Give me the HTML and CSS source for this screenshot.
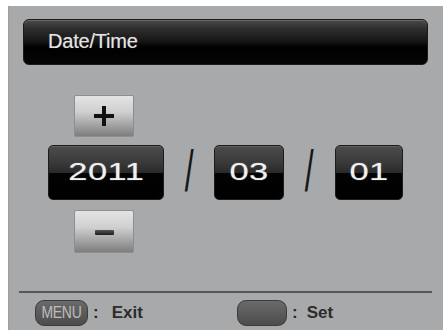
FILE: index.html
```html
<!DOCTYPE html>
<html>
<head>
<meta charset="utf-8">
<link rel="stylesheet" href="styles.css">
</head>
<body>
<div class="panel">
  <div class="header"><span class="title">Date/Time</span></div>
  <div class="step step-plus"><span class="plus"></span></div>
  <div class="date-row">
    <div class="field field-year"><span class="digits">2011</span></div>
    <div class="sep"><span class="slash">/</span></div>
    <div class="field field-month"><span class="digits">03</span></div>
    <div class="sep sep-2"><span class="slash">/</span></div>
    <div class="field field-day"><span class="digits">01</span></div>
  </div>
  <div class="step step-minus"><span class="minus"></span></div>
  <div class="rule"></div>
  <div class="footer">
    <div class="hint hint-exit">
      <span class="key key-menu"><span class="key-text">MENU</span></span>
      <span class="colon">:</span>
      <span class="label label-exit">Exit</span>
    </div>
    <div class="hint hint-set">
      <span class="key key-blank"></span>
      <span class="colon">:</span>
      <span class="label label-set">Set</span>
    </div>
  </div>
</div>
</body>
</html>
```

FILE: styles.css
```css
html, body {
  margin: 0;
  padding: 0;
  background: #ffffff;
}

body {
  width: 443px;
  height: 334px;
  overflow: hidden;
  font-family: "Liberation Sans", Arial, sans-serif;
}

.panel {
  margin: 6px 0 0 8px;
  width: 435px;
  height: 324px;
  background: #a7a9ab;
  display: flex;
  flex-direction: column;
  box-sizing: border-box;
  border-left: 1px solid #9c9ea0;
}

.header {
  margin: 13px 15px 0 14px;
  height: 46px;
  box-sizing: border-box;
  border-radius: 6px;
  border: 1px solid #1a1a1a;
  background: linear-gradient(to bottom, #4a4a4a 0%, #2e2e2e 20%, #141414 50%, #000000 62%, #050505 100%);
  box-shadow: inset 0 1px 0 rgba(255,255,255,0.18);
  display: flex;
  align-items: center;
  padding-left: 24px;
}

.title {
  color: #e4e4e4;
  font-size: 20px;
  letter-spacing: -0.2px;
  text-shadow: 0 0 1px rgba(255,255,255,0.4);
  margin-top: -1px;
}

.step {
  width: 60px;
  height: 42px;
  box-sizing: border-box;
  margin-left: 65px;
  border-radius: 2px;
  border: 1px solid #8c8e90;
  background: linear-gradient(to bottom, #e4e4e4 0%, #cfcfcf 40%, #a0a0a0 75%, #7e7e7e 100%);
  display: flex;
  align-items: center;
  justify-content: center;
  position: relative;
}

.step-plus {
  margin-top: 30px;
}

.step-minus {
  margin-top: 10px;
  height: 43px;
}

.plus {
  width: 20px;
  height: 20px;
  position: relative;
}

.plus::before,
.plus::after {
  content: "";
  position: absolute;
  background: #111111;
}

.plus::before {
  left: 0;
  top: 8px;
  width: 20px;
  height: 4px;
}

.plus::after {
  left: 8px;
  top: 0;
  width: 4px;
  height: 20px;
}

.minus {
  width: 19px;
  height: 5px;
  border-radius: 1px;
  background: linear-gradient(to bottom, #555555, #1e1e1e);
  margin-top: 2px;
}

.date-row {
  margin-top: 8px;
  height: 55px;
  display: flex;
  padding-left: 39px;
}

.field {
  height: 55px;
  box-sizing: border-box;
  border-radius: 5px;
  border: 1px solid #1c1c1c;
  background: linear-gradient(to bottom, #4c4c4c 0%, #3a3a3a 30%, #2a2a2a 50%, #030303 52%, #000000 100%);
  box-shadow: inset 0 1px 0 rgba(255,255,255,0.12);
  display: flex;
  align-items: center;
  justify-content: center;
}

.field-year {
  width: 116px;
}

.field-month {
  width: 70px;
}

.field-day {
  width: 68px;
}

.digits {
  display: inline-block;
  color: #f0f0f0;
  font-size: 23px;
  transform: scaleX(1.5);
  letter-spacing: 0.3px;
  margin-top: -1px;
  text-shadow: 0 0 1px rgba(255,255,255,0.5);
}

.sep {
  width: 50px;
  display: flex;
  align-items: center;
  justify-content: center;
}

.sep-2 {
  width: 51px;
}

.slash {
  display: inline-block;
  font-size: 58px;
  color: #161616;
  transform: scaleX(0.55);
  line-height: 1;
  margin-top: -4px;
}

.rule {
  margin: 38px 11px 0 10px;
  height: 2px;
  background: #55585a;
}

.footer {
  margin-top: 7px;
  height: 26px;
  display: grid;
  grid-template-columns: 202px 1fr;
  padding-left: 26px;
}

.hint {
  display: flex;
  align-items: center;
}

.key {
  height: 26px;
  box-sizing: border-box;
  border-radius: 9px;
  border: 1px solid #3c3c3c;
  background: linear-gradient(to bottom, #6a6a6a, #4c4c4c);
  display: flex;
  align-items: center;
  justify-content: center;
}

.key-menu {
  width: 53px;
}

.key-text {
  display: inline-block;
  color: #bdbdbd;
  font-size: 17px;
  transform: scaleX(0.82);
  letter-spacing: -0.3px;
  white-space: nowrap;
}

.key-blank {
  width: 50px;
}

.colon {
  color: #2a2a2a;
  font-size: 17px;
  font-weight: bold;
  margin-left: 5px;
}

.label {
  color: #2c2c2c;
  font-size: 17px;
  font-weight: bold;
}

.label-exit {
  margin-left: 13px;
}

.label-set {
  margin-left: 9px;
}
```
